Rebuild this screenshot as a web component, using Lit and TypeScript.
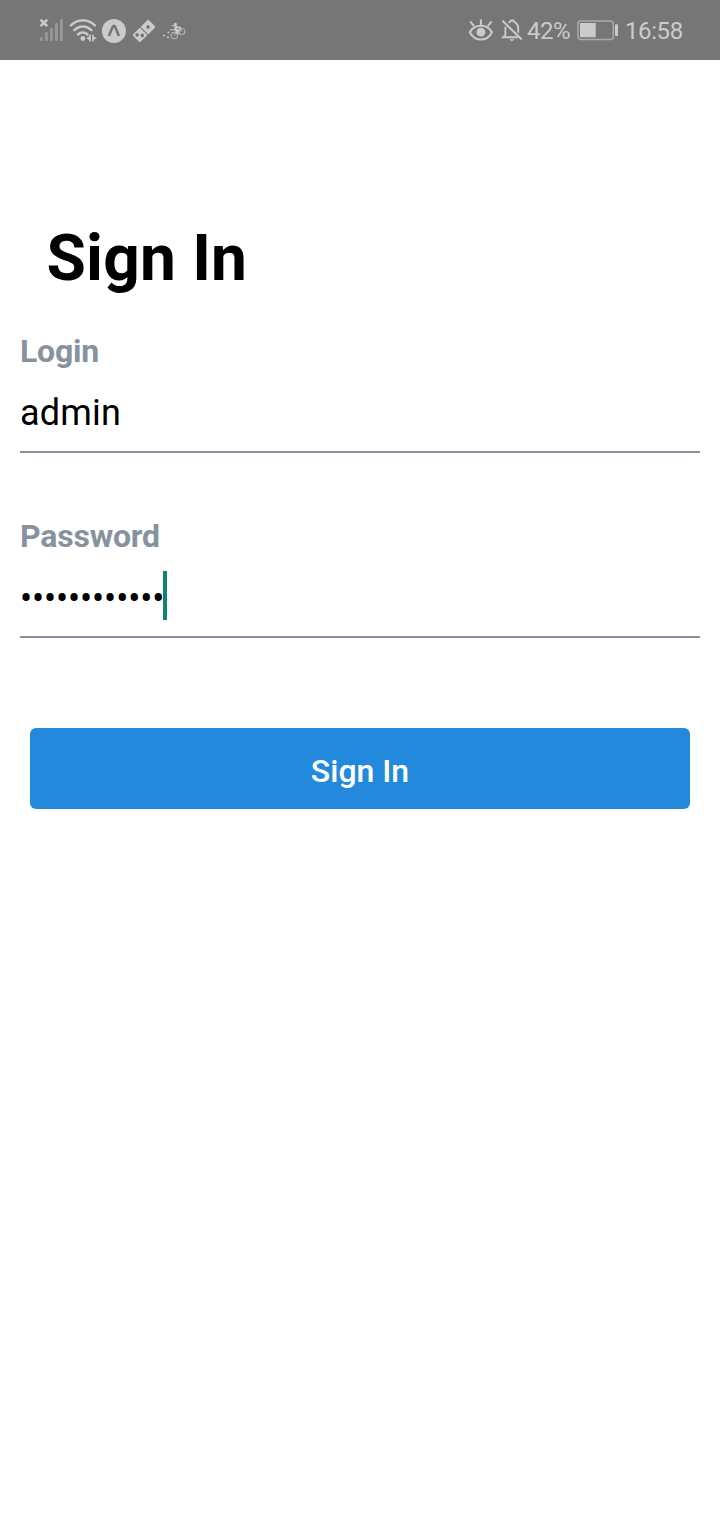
import { LitElement, html, css } from "lit";
import { customElement } from "lit/decorators.js";

@customElement("status-bar")
class StatusBar extends LitElement {
  static styles = css`
    :host {
      display: flex;
      justify-content: space-between;
      box-sizing: border-box;
      height: 60px;
      padding: 15px 37px 15px 38px;
      background: #767676;
      color: #cbcbcb;
      font: 400 24px/30px Roboto, sans-serif;
    }
    .group { display: flex; align-items: center; }
    svg { display: block; flex: none; height: 30px; fill: none; stroke: currentColor; }
    .solid { fill: currentColor; stroke: none; }
    .dim { fill: #989898; stroke: none; }
    .text { white-space: pre; padding-top: 2px; }
    .percent { width: 49px; letter-spacing: -0.5px; }
    .clock { width: 58px; letter-spacing: -0.4px; }
  `;

  render() {
    return html`
      <div class="group">
        <svg width="30" viewBox="38 15 30 30">
          <path d="M40.6 19.6l6.6 6.6M47.2 19.6l-6.6 6.6" stroke-width="2.5" />
          <g class="dim">
            <rect x="40" y="37" width="2.8" height="4" rx="1" />
            <rect x="45" y="32" width="2.8" height="9" rx="1" />
            <rect x="50" y="28" width="2.8" height="13" rx="1" />
            <rect x="55" y="23" width="2.8" height="18" rx="1" />
            <rect x="60" y="19" width="2.8" height="22" rx="1" />
          </g>
        </svg>
        <svg width="32" viewBox="68 15 32 30">
          <g stroke-width="2.4" stroke-linecap="round">
            <path d="M70.8 25.4C77.7 18.7 88 18.7 94.9 25.4" />
            <path d="M74.3 30.2C79.4 25.2 86.3 25.2 91.4 30.2" />
            <path d="M78 34.5C80.8 31.9 84.8 31.9 87.6 34.5" />
          </g>
          <circle class="solid" cx="82.8" cy="38.5" r="2.4" />
          <path class="solid" d="M90.9 34.8v6.7h-1.7v-1.6l-3-1.7 3-1.7v-1.7zM92.2 34.8h1.6v1.9l3 1.5-3 1.5v1.8h-1.6z" />
        </svg>
        <svg width="30" viewBox="100 15 30 30">
          <circle class="solid" cx="113.9" cy="31" r="12" />
          <path d="M108.9 36l3.8-9.2q1.2-2 2.4 0l3.8 9.2" stroke="#767676" stroke-width="2.6" />
        </svg>
        <svg width="30" viewBox="130 15 30 30">
          <g transform="rotate(-45 144 31)">
            <rect class="solid" x="132.8" y="25.7" width="22.4" height="10.6" rx="1.5" />
            <path d="M144 25.5v11" stroke="#767676" stroke-width="1.1" />
            <g fill="#767676" stroke="none">
              <circle cx="149.7" cy="31" r="1.8" />
              <circle cx="136.4" cy="28.9" r="1.8" />
              <circle cx="139.6" cy="33" r="1.8" />
            </g>
          </g>
        </svg>
        <svg width="30" viewBox="160 15 30 30">
          <g stroke-width="1.1" stroke="#b4b4b4">
            <circle cx="174.3" cy="35.6" r="3.2" />
            <circle cx="181.9" cy="31.5" r="3" />
            <path d="M174.3 35.6l1.9-4.6 4-2.4 1.7 2.9M176.3 30.5l2.3 3.2 2-5" />
            <path d="M171.6 25.6h3.4M170 29.6h5" />
          </g>
          <path d="M176 25.5l-.6 4 2.4 1.4-1.2 2.9" stroke-width="2.4" />
          <path d="M176.4 27.2l4.6.4" stroke-width="1.7" />
          <g class="solid">
            <circle cx="175.4" cy="24.2" r="1.5" />
            <circle cx="164" cy="35.5" r="1" />
            <circle cx="167.9" cy="37.3" r="1" />
            <circle cx="168.3" cy="32.4" r="0.9" />
          </g>
        </svg>
      </div>
      <div class="group">
        <svg width="32" viewBox="467 15 32 30">
          <path d="M469.8 32.2C475 23.6 487 23.6 491.9 32.2C487 42 475 42 469.8 32.2Z" stroke-width="2" />
          <circle class="solid" cx="480.9" cy="32.2" r="4.4" />
          <path d="M480.9 19.4v5.5M470.1 21.4l4 4.8M491.7 21.4l-4 4.8" stroke-width="2" />
        </svg>
        <svg width="28" viewBox="499 15 28 30">
          <g stroke-width="1.9">
            <path d="M502.5 20.8l19.2 18.7" stroke-width="2.1" />
            <path d="M505.4 26.7v8.2l-2.2 2.4h14.5M508.4 22.8c1.2-.9 2.2-.8 2.6-2.3h2c.4 1.7 5.2 2 5.2 7.3v5" />
          </g>
          <path class="solid" d="M509.7 39.3h4.5c-.5 2.2-4 2.2-4.5 0z" />
        </svg>
        <span class="text percent">42%</span>
        <svg width="49" viewBox="576 15 49 30">
          <rect x="578" y="21" width="35.3" height="18.4" rx="3" stroke="#aaa" stroke-width="1.5" />
          <rect class="solid" x="580" y="23" width="15.7" height="14.2" />
          <rect class="solid" x="615" y="24.3" width="3" height="11.7" rx="1" />
        </svg>
        <span class="text clock">16:58</span>
      </div>
    `;
  }
}

@customElement("form-field")
class FormField extends LitElement {
  static properties = {
    label: { type: String },
    value: { type: String },
    focused: { type: Boolean },
  };
  declare label: string;
  declare value: string;
  declare focused: boolean;

  static styles = css`
    :host { display: block; box-sizing: border-box; height: 121px; border-bottom: 2px solid #86939e; }
    .label { color: #86939e; font-weight: 700; font-size: 32px; line-height: 38px; letter-spacing: -0.2px; }
    .entry { display: flex; align-items: center; height: 49px; margin-top: 16px; font-size: 36px; line-height: 42px; }
    .value { margin-top: 4px; letter-spacing: 0.2px; }
    .masked { margin-top: 6px; letter-spacing: -0.13px; }
    .caret { width: 4px; height: 49px; background: #128070; margin-left: -1px; }
  `;

  render() {
    return html`
      <div class="label">${this.label}</div>
      <div class="entry">
        <span class="value ${this.focused ? "masked" : ""}">${this.value}</span>
        ${this.focused ? html`<span class="caret"></span>` : ""}
      </div>
    `;
  }
}

@customElement("app-root")
class AppRoot extends LitElement {
  static styles = css`
    :host {
      display: block;
      height: 1520px;
      background: #fff;
      color: #000;
      font-family: Roboto, sans-serif;
    }
    .form { display: flex; flex-direction: column; padding: 161px 20px 0; }
    .title { margin: 0 0 35px 26.5px; font-size: 64px; line-height: 76px; font-weight: 700; letter-spacing: 0.2px; }
    .password { margin-top: 64px; }
    .submit {
      height: 81px;
      margin: 90px 10px 0;
      padding: 4px 0 0;
      border: 0;
      border-radius: 6px;
      background: #2289dc;
      color: #fff;
      font: 500 32px/38px Roboto, sans-serif;
    }
  `;

  render() {
    return html`
      <status-bar></status-bar>
      <main class="form">
        <h1 class="title">Sign In</h1>
        <form-field label="Login" value="admin"></form-field>
        <form-field class="password" label="Password" value="${"•".repeat(12)}" focused></form-field>
        <button class="submit">Sign In</button>
      </main>
    `;
  }
}
